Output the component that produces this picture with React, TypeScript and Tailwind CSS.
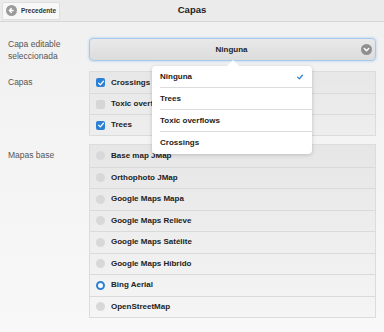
import React from "react";

const Check = ({ className }: { className?: string }) => (
  <svg viewBox="0 0 10 10" className={className}>
    <path d="M2 5.2 L4.2 7.3 L8 2.8" fill="none" stroke="currentColor" strokeWidth="1.6" strokeLinecap="round" strokeLinejoin="round" />
  </svg>
);

const layers = [
  { name: "Crossings", on: true },
  { name: "Toxic overflows", on: false },
  { name: "Trees", on: true },
];

const bases = [
  { name: "Base map JMap", on: false },
  { name: "Orthophoto JMap", on: false },
  { name: "Google Maps Mapa", on: false },
  { name: "Google Maps Relieve", on: false },
  { name: "Google Maps Satélite", on: false },
  { name: "Google Maps Híbrido", on: false },
  { name: "Bing Aerial", on: true },
  { name: "OpenStreetMap", on: false },
];

const options = ["Ninguna", "Trees", "Toxic overflows", "Crossings"];

export default function App() {
  return (
    <div
      className="relative w-[384px] h-[332px] overflow-hidden bg-gradient-to-b from-[#f0f0f0] to-[#f8f8f8] text-[#222]"
      style={{ fontFamily: '"Liberation Sans", Arial, sans-serif' }}
    >
      {/* Header */}
      <div className="grid grid-cols-[1fr_auto_1fr] items-center h-[22px] bg-[#ebebeb] border-b border-[#d6d6d6]">
        <div className="pl-[2px]">
          <div className="flex items-center gap-[4px] w-[58px] h-[18px] pl-[3px] bg-[#f8f8f8] border border-[#dedede] rounded-[2px]">
            <svg viewBox="0 0 12 12" className="w-[11px] h-[11px]">
              <circle cx="6" cy="6" r="6" fill="#9b9b9b" />
              <path d="M7.8 6 H4 M5.8 3.9 L3.7 6 L5.8 8.1" fill="none" stroke="#fff" strokeWidth="1.5" strokeLinecap="round" strokeLinejoin="round" />
            </svg>
            <span className="text-[6.5px] font-bold text-[#333]">Precedente</span>
          </div>
        </div>
        <div className="text-[9.5px] font-bold text-[#222]">Capas</div>
        <div />
      </div>

      {/* Body */}
      <div className="grid grid-cols-[81px_287px] pl-[8px] pt-[16px]">
        {/* Row 1 */}
        <div className="flex items-center text-[8.5px] leading-[12px] text-[#555] h-[23px]">
          <span>
            Capa editable
            <br />
            seleccionada
          </span>
        </div>
        <div className="relative h-[23px] rounded-[4px] border border-[#a9c9ea] shadow-[0_0_3px_#a8cdf0] bg-gradient-to-b from-[#e9e9e9] to-[#dcdcdc] flex items-center justify-center">
          <span className="text-[8px] font-bold text-[#222] pr-[2px]">Ninguna</span>
          <svg viewBox="0 0 12 12" className="absolute right-[3px] top-[5px] w-[11px] h-[11px]">
            <circle cx="6" cy="6" r="6" fill="#8f8f8f" />
            <path d="M3.6 4.9 L6 7.3 L8.4 4.9" fill="none" stroke="#fff" strokeWidth="1.6" strokeLinecap="round" strokeLinejoin="round" />
          </svg>
        </div>

        {/* Row 2 */}
        <div className="text-[8.5px] text-[#555] pt-[5px] mt-[10px]">Capas</div>
        <div className="mt-[10px] border border-[#dcdcdc] bg-gradient-to-b from-[#e7e7e7] to-[#eeeeee]">
          {layers.map((l, i) => (
            <div
              key={l.name}
              className={`flex items-center h-[21px] pl-[6px] gap-[6px] ${i > 0 ? "border-t border-[#dadada]" : ""}`}
            >
              {l.on ? (
                <div className="w-[9px] h-[9px] rounded-[2px] bg-[#2b7fd4] flex items-center justify-center text-white">
                  <Check className="w-[8px] h-[8px]" />
                </div>
              ) : (
                <div className="w-[9px] h-[9px] rounded-[2px] bg-[#d6d6d6]" />
              )}
              <span className="text-[8px] font-bold text-[#222] whitespace-nowrap">{l.name}</span>
            </div>
          ))}
        </div>

        {/* Row 3 */}
        <div className="text-[8.5px] text-[#555] pt-[5px] mt-[8px]">Mapas base</div>
        <div className="mt-[8px] border border-[#dcdcdc] bg-gradient-to-b from-[#e6e6e6] to-[#f5f5f5]">
          {bases.map((b, i) => (
            <div
              key={b.name}
              className={`flex items-center h-[21.5px] pl-[6px] gap-[6px] ${i > 0 ? "border-t border-[#dadada]" : ""}`}
            >
              {b.on ? (
                <div className="w-[9px] h-[9px] rounded-full border-[2.5px] border-[#2b7fd4] bg-white" />
              ) : (
                <div className="w-[9px] h-[9px] rounded-full bg-[#d8d8d8]" />
              )}
              <span className="text-[8px] font-bold text-[#222] whitespace-nowrap">{b.name}</span>
            </div>
          ))}
        </div>
      </div>

      {/* Popover */}
      <div className="absolute left-[152px] top-[66px] w-[160px] rounded-[4px] bg-white shadow-[0_1px_4px_rgba(0,0,0,0.18)]">
        <div className="absolute left-[75px] top-[-6px] w-0 h-0 border-l-[6px] border-r-[6px] border-b-[6px] border-l-transparent border-r-transparent border-b-white" />
        {options.map((o, i) => (
          <div key={o} className="pl-[8px]">
            <div
              className={`flex items-center justify-between h-[22px] pr-[8px] ${i < options.length - 1 ? "border-b border-[#dcdcdc]" : ""}`}
            >
              <span className="text-[8px] font-bold text-[#222]">{o}</span>
              {i === 0 && <Check className="w-[8px] h-[8px] text-[#2b7fd4]" />}
            </div>
          </div>
        ))}
      </div>
    </div>
  );
}
